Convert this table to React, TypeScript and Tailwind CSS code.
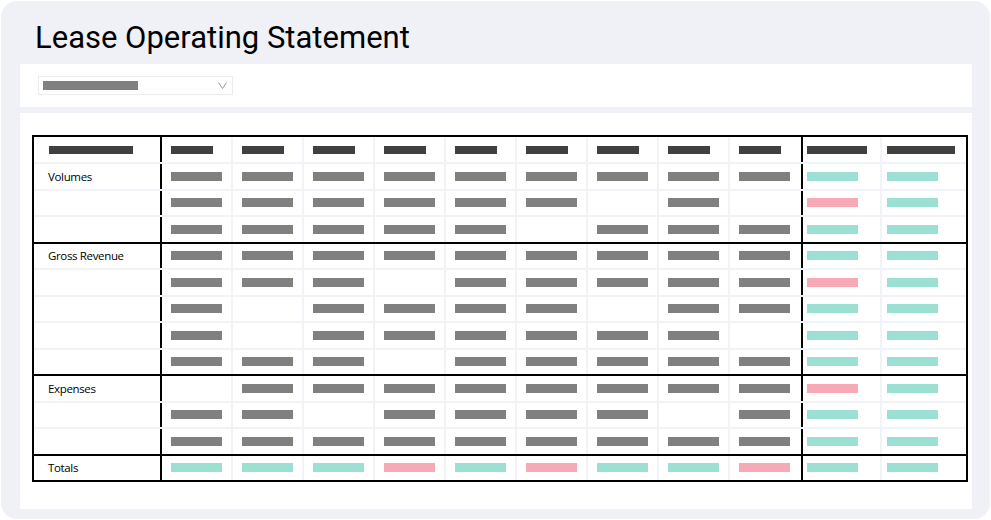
import React from 'react'

// g = gray value, t = positive (teal), p = negative (pink), _ = empty
type Cell = 'g' | 't' | 'p' | '_'

interface Section {
  label: string
  rows: string[]
}

const sections: Section[] = [
  {
    label: 'Volumes',
    rows: ['ggggggggg|tt', 'gggggg_g_|pt', 'ggggg_ggg|tt'],
  },
  {
    label: 'Gross Revenue',
    rows: ['ggggggggg|tt', 'ggg_ggggg|pt', 'g_gggg_gg|tt', 'g_gggggg_|tt', 'ggg_ggggg|tt'],
  },
  {
    label: 'Expenses',
    rows: ['_gggggggg|pt', 'gg_gggg_g|tt', 'ggggggggg|tt'],
  },
  {
    label: 'Totals',
    rows: ['tttptpttp|tt'],
  },
]

const barColor: Record<Cell, string> = {
  g: 'bg-[#808080]',
  t: 'bg-[#9be0d2]',
  p: 'bg-[#f7aab6]',
  _: '',
}

function Bar({ kind }: { kind: Cell }) {
  if (kind === '_') return null
  return <div className={`h-[9px] w-[51px] ${barColor[kind]}`} />
}

function HeaderRow() {
  return (
    <div className="flex h-[27px] border-b-2 border-[#f2f3f8]">
      <div className="flex w-[128px] items-center border-r-2 border-black pl-[15px]">
        <div className="h-[8px] w-[84px] bg-[#404040]" />
      </div>
      {Array.from({ length: 9 }).map((_, i) => (
        <div
          key={i}
          className={`flex w-[71px] items-center pl-[9px] ${i < 8 ? 'border-r-2 border-[#f2f3f8]' : ''}`}
        >
          <div className="h-[8px] w-[42px] bg-[#404040]" />
        </div>
      ))}
      <div className="flex w-[81px] items-center border-x-2 border-l-black border-r-[#f2f3f8] pl-[4px]">
        <div className="h-[8px] w-[60px] bg-[#404040]" />
      </div>
      <div className="flex flex-1 items-center pl-[5px]">
        <div className="h-[8px] w-[68px] bg-[#404040]" />
      </div>
    </div>
  )
}

function DataRow({ label, pattern, closing }: { label?: string; pattern: string; closing: boolean }) {
  const [mid, right] = pattern.split('|')
  return (
    <div className={`flex h-[26.5px] border-b-2 ${closing ? 'border-black' : 'border-[#f2f3f8]'}`}>
      <div className="flex w-[128px] items-center border-r-2 border-black pl-[14px] text-[11.5px] tracking-[-0.35px] text-black">
        {label}
      </div>
      {mid.split('').map((c, i) => (
        <div
          key={i}
          className={`flex w-[71px] items-center pl-[9px] ${i < 8 ? 'border-r-2 border-[#f2f3f8]' : ''}`}
        >
          <Bar kind={c as Cell} />
        </div>
      ))}
      <div className="flex w-[81px] items-center border-x-2 border-l-black border-r-[#f2f3f8] pl-[4px]">
        <Bar kind={right[0] as Cell} />
      </div>
      <div className="flex flex-1 items-center pl-[5px]">
        <Bar kind={right[1] as Cell} />
      </div>
    </div>
  )
}

export default function App() {
  return (
    <div className="min-h-screen bg-white p-px" style={{ fontFamily: '"Open Sans", sans-serif' }}>
      <div className="h-[518px] w-[989px] rounded-[16px] bg-[#f0f1f7]">
        {/* Title */}
        <h1 className="pl-[34px] pt-[21px] text-[31px] leading-[32px] text-black" style={{ fontFamily: 'Roboto, sans-serif' }}>
          Lease Operating Statement
        </h1>

        {/* Filter bar */}
        <div className="ml-[19px] mt-[10px] h-[43px] w-[952px] bg-white pl-[18px] pt-[12px]">
          <div className="flex h-[19px] w-[195px] items-center justify-between border border-[#ececec] pl-[4px] pr-[5px]">
            <div className="h-[9px] w-[95px] bg-[#808080]" />
            <svg width="9" height="7" viewBox="0 0 9 7" fill="none">
              <polyline points="0.5,0.5 4.5,6.5 8.5,0.5" stroke="#9a9a9a" strokeWidth="1" />
            </svg>
          </div>
        </div>

        {/* Statement table */}
        <div className="ml-[19px] mt-[6px] h-[396px] w-[952px] bg-white pl-[12px] pt-[22px]">
          <div className="w-[936px] border-x-2 border-t-2 border-black">
            <HeaderRow />
            {sections.map((s) =>
              s.rows.map((r, i) => (
                <DataRow
                  key={s.label + i}
                  label={i === 0 ? s.label : undefined}
                  pattern={r}
                  closing={i === s.rows.length - 1}
                />
              ))
            )}
          </div>
        </div>
      </div>
    </div>
  )
}
